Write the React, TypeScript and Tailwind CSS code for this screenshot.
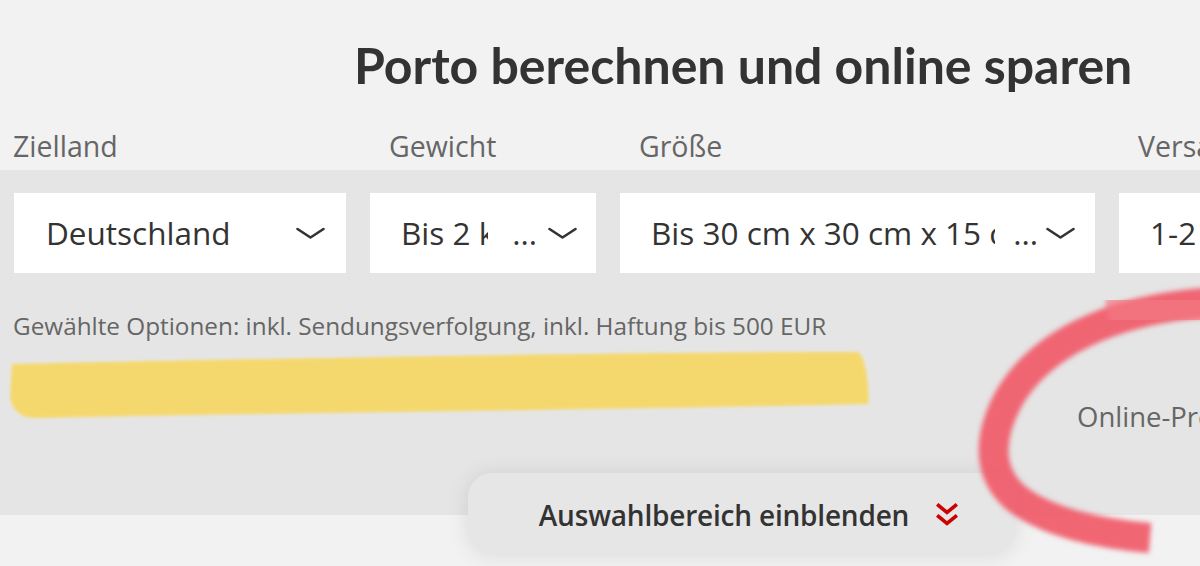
import React from "react";

const Chevron = () => (
  <svg width="29" height="13" viewBox="0 0 29 13" className="shrink-0">
    <path d="M1.5 2 L14.5 10.5 L27.5 2" fill="none" stroke="#333" strokeWidth="2.6" strokeLinecap="round" strokeLinejoin="round" />
  </svg>
);

const DoubleChevron = () => (
  <svg width="22" height="25" viewBox="0 0 22 25" className="shrink-0">
    <path d="M2.5 2.5 L11 9.5 L19.5 2.5" fill="none" stroke="#cc0000" strokeWidth="3.6" strokeLinecap="square" />
    <path d="M2.5 13.5 L11 20.5 L19.5 13.5" fill="none" stroke="#cc0000" strokeWidth="3.6" strokeLinecap="square" />
  </svg>
);

export default function App() {
  return (
    <div className="relative w-[1200px] h-[566px] overflow-hidden bg-[#f2f2f2] font-['Open_Sans',sans-serif]">
      <h1 className="pt-[40px] pl-[354px] text-[50px] leading-[50px] font-bold text-[#333] whitespace-nowrap font-['Lato',sans-serif]">
        Porto berechnen und online sparen
      </h1>

      <div className="mt-[42px] mb-[10px] flex pl-[13px] text-[28.5px] leading-[28px] text-[#666] whitespace-nowrap">
        <div className="w-[357px] shrink-0">Zielland</div>
        <div className="w-[250px] shrink-0 pl-[19px]">Gewicht</div>
        <div className="w-[499px] shrink-0 pl-[19px]">Größe</div>
        <div className="shrink-0 pl-[19px]">Versanddauer</div>
      </div>

      <div className="h-[345px] bg-[#e5e5e5] pt-[23px]">
        <div className="flex gap-[24px] pl-[14px] text-[31.5px] text-[#333] whitespace-nowrap">
          <div className="flex h-[80px] w-[332px] shrink-0 items-center bg-white pl-[32px] pr-[21px]">
            <span>Deutschland</span>
            <span className="ml-auto"><Chevron /></span>
          </div>
          <div className="flex h-[80px] w-[226px] shrink-0 items-center bg-white pl-[31px] pr-[19px]">
            <span className="block w-[87px] overflow-hidden">Bis 2 kg</span>
            <span className="ml-auto">...</span>
            <span className="ml-[11px]"><Chevron /></span>
          </div>
          <div className="flex h-[80px] w-[475px] shrink-0 items-center bg-white pl-[31px] pr-[20px]">
            <span className="block w-[344px] overflow-hidden">Bis 30 cm x 30 cm x 15 cm</span>
            <span className="ml-auto">...</span>
            <span className="ml-[8px]"><Chevron /></span>
          </div>
          <div className="flex h-[80px] w-[300px] shrink-0 items-center bg-white pl-[31px]">
            <span>1-2</span>
          </div>
        </div>

        <p className="mt-[39px] pl-[13px] text-[24.3px] leading-[28px] text-[#666] whitespace-nowrap">
          Gewählte Optionen: inkl. Sendungsverfolgung, inkl. Haftung bis 500 EUR
        </p>

        <div className="mt-[62px] flex justify-end">
          <div className="w-[123px] overflow-hidden whitespace-nowrap text-[27.5px] leading-[30px] text-[#666]">
            Online-Preis
          </div>
        </div>
      </div>

      <div className="-mt-[42px] pl-[468px]">
        <div className="flex h-[80px] w-[547px] items-center justify-center gap-[27px] rounded-[24px] bg-[#e6e6e6] pl-[14px] pt-[4px] shadow-[0_2px_22px_rgba(0,0,0,0.10)]">
          <span className="text-[28px] font-semibold text-[#333] tracking-[-0.2px]">Auswahlbereich einblenden</span>
          <DoubleChevron />
        </div>
      </div>

      <svg className="pointer-events-none absolute left-0 top-0" width="1200" height="566" viewBox="0 0 1200 566">
        <defs>
          <filter id="soft" x="-10%" y="-10%" width="120%" height="120%">
            <feGaussianBlur stdDeviation="1.6" />
          </filter>
          <filter id="softer" x="-10%" y="-10%" width="120%" height="120%">
            <feGaussianBlur stdDeviation="2.4" />
          </filter>
        </defs>
        <path
          d="M12 364 C 200 360, 600 352, 858 352 C 866 356, 870 392, 868 404 C 600 410, 200 414, 40 418 C 20 419, 12 410, 10 396 Z"
          fill="#f5d86d"
          filter="url(#soft)"
        />
        <path
          d="M1215 302 C 1110 308, 1038 346, 1008 400 C 986 442, 990 476, 1016 498 C 1046 522, 1100 534, 1150 538"
          fill="none"
          stroke="#f15a68"
          strokeOpacity="0.92"
          strokeWidth="30"
          strokeLinecap="butt"
          filter="url(#softer)"
        />
        <path
          d="M1108 318 L 1215 302"
          fill="none"
          stroke="#f37682"
          strokeOpacity="0.7"
          strokeWidth="40"
          filter="url(#softer)"
        />
      </svg>
    </div>
  );
}
